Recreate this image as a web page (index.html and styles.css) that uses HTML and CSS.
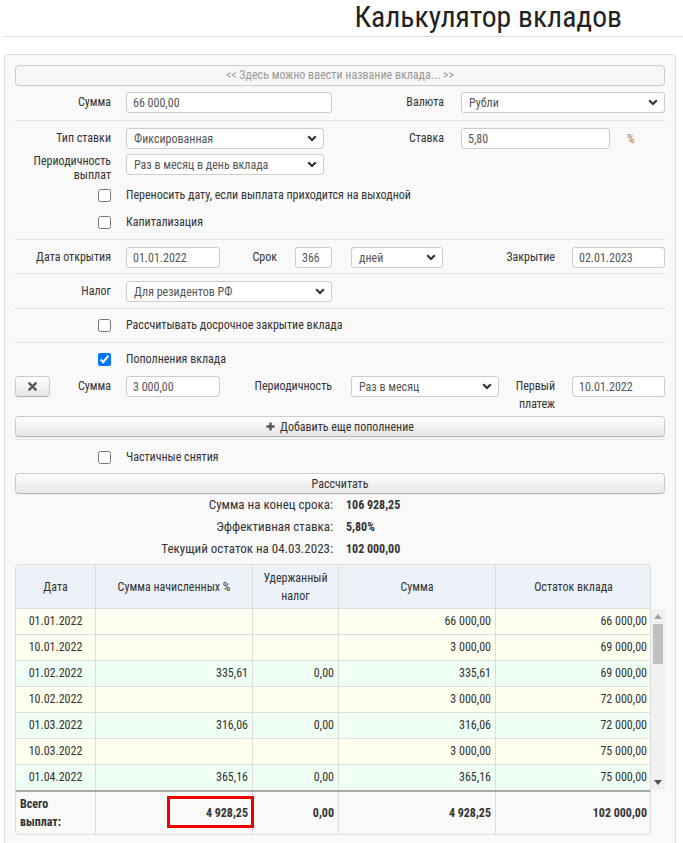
FILE: index.html
```html
<!DOCTYPE html>
<html lang="ru">
<head>
<meta charset="utf-8">
<title>Калькулятор вкладов</title>
<link rel="stylesheet" href="styles.css">
</head>
<body>
<header class="pagehead">
  <h1 class="title">Калькулятор вкладов</h1>
</header>

<main class="panel">
  <section class="sec s1">
    <div class="namebar">&lt;&lt; Здесь можно ввести название вклада... &gt;&gt;</div>
    <div class="row r1">
      <label class="lbl l1">Сумма</label>
      <input class="inp w206" type="text" value="66 000,00">
      <label class="lbl w112 mr17">Валюта</label>
      <div class="select w204"><span>Рубли</span><svg class="chev" viewBox="0 0 10 7" width="10" height="7"><path d="M1.2 1.2 L5 5 L8.8 1.2"/></svg></div>
    </div>
  </section>

  <section class="sec s2">
    <div class="row">
      <label class="lbl l1">Тип ставки</label>
      <div class="select w198"><span>Фиксированная</span><svg class="chev" viewBox="0 0 10 7" width="10" height="7"><path d="M1.2 1.2 L5 5 L8.8 1.2"/></svg></div>
      <label class="lbl w120 mr17">Ставка</label>
      <input class="inp w149" type="text" value="5,80">
      <span class="pct">%</span>
    </div>
    <div class="row r3">
      <label class="lbl l1 twoline">Периодичность выплат</label>
      <div class="select w198"><span>Раз в месяц в день вклада</span><svg class="chev" viewBox="0 0 10 7" width="10" height="7"><path d="M1.2 1.2 L5 5 L8.8 1.2"/></svg></div>
    </div>
    <div class="row cbrow cb1">
      <span class="cbcell"><input type="checkbox"></span>
      <span class="cbtext">Переносить дату, если выплата приходится на выходной</span>
    </div>
    <div class="row cbrow cb2">
      <span class="cbcell"><input type="checkbox"></span>
      <span class="cbtext">Капитализация</span>
    </div>
  </section>

  <section class="sec s3">
    <div class="row">
      <label class="lbl l1">Дата открытия</label>
      <input class="inp w94" type="text" value="01.01.2022">
      <label class="lbl w57 mr18">Срок</label>
      <input class="inp w37" type="text" value="366">
      <div class="select w92 ml19"><span>дней</span><svg class="chev" viewBox="0 0 10 7" width="10" height="7"><path d="M1.2 1.2 L5 5 L8.8 1.2"/></svg></div>
      <label class="lbl w112 mr17">Закрытие</label>
      <input class="inp w93" type="text" value="02.01.2023">
    </div>
  </section>

  <section class="sec s4">
    <div class="row">
      <label class="lbl l1">Налог</label>
      <div class="select w206"><span>Для резидентов РФ</span><svg class="chev" viewBox="0 0 10 7" width="10" height="7"><path d="M1.2 1.2 L5 5 L8.8 1.2"/></svg></div>
    </div>
  </section>

  <section class="sec s5">
    <div class="row cbrow">
      <span class="cbcell"><input type="checkbox"></span>
      <span class="cbtext">Рассчитывать досрочное закрытие вклада</span>
    </div>
  </section>

  <section class="sec s6">
    <div class="row cbrow">
      <span class="cbcell"><input type="checkbox" checked></span>
      <span class="cbtext">Пополнения вклада</span>
    </div>
    <div class="row rep">
      <button class="btn xbtn" type="button"><svg viewBox="0 0 10 10" width="9" height="9"><path d="M1.5 1.5 L8.5 8.5 M8.5 1.5 L1.5 8.5"/></svg></button>
      <label class="lbl w61 mr15 lt">Сумма</label>
      <input class="inp w94" type="text" value="3 000,00">
      <label class="lbl w112 mr19 lt">Периодичность</label>
      <div class="select w148"><span>Раз в месяц</span><svg class="chev" viewBox="0 0 10 7" width="10" height="7"><path d="M1.2 1.2 L5 5 L8.8 1.2"/></svg></div>
      <label class="lbl w56 mr17 lt">Первый платеж</label>
      <input class="inp w93" type="text" value="10.01.2022">
    </div>
    <button class="btn wide addbtn" type="button"><svg class="plus" viewBox="0 0 10 10" width="9" height="9"><path d="M5 0.5 V9.5 M0.5 5 H9.5"/></svg>Добавить еще пополнение</button>
  </section>

  <section class="s7">
    <div class="row cbrow">
      <span class="cbcell"><input type="checkbox"></span>
      <span class="cbtext">Частичные снятия</span>
    </div>
    <button class="btn wide calcbtn" type="button">Рассчитать</button>
  </section>

  <dl class="results">
    <dt>Сумма на конец срока:</dt><dd>106 928,25</dd>
    <dt>Эффективная ставка:</dt><dd>5,80%</dd>
    <dt>Текущий остаток на 04.03.2023:</dt><dd>102 000,00</dd>
  </dl>

  <div class="grid">
    <div class="thead trow">
      <div class="c">Дата</div>
      <div class="c">Сумма начисленных %</div>
      <div class="c">Удержанный<br>налог</div>
      <div class="c">Сумма</div>
      <div class="c">Остаток вклада</div>
    </div>
    <div class="tbodywrap">
      <div class="tbody">
        <div class="trow y"><div class="c d">01.01.2022</div><div class="c n"></div><div class="c n"></div><div class="c n">66 000,00</div><div class="c n">66 000,00</div></div>
        <div class="trow y"><div class="c d">10.01.2022</div><div class="c n"></div><div class="c n"></div><div class="c n">3 000,00</div><div class="c n">69 000,00</div></div>
        <div class="trow g"><div class="c d">01.02.2022</div><div class="c n">335,61</div><div class="c n">0,00</div><div class="c n">335,61</div><div class="c n">69 000,00</div></div>
        <div class="trow y"><div class="c d">10.02.2022</div><div class="c n"></div><div class="c n"></div><div class="c n">3 000,00</div><div class="c n">72 000,00</div></div>
        <div class="trow g"><div class="c d">01.03.2022</div><div class="c n">316,06</div><div class="c n">0,00</div><div class="c n">316,06</div><div class="c n">72 000,00</div></div>
        <div class="trow y"><div class="c d">10.03.2022</div><div class="c n"></div><div class="c n"></div><div class="c n">3 000,00</div><div class="c n">75 000,00</div></div>
        <div class="trow g"><div class="c d">01.04.2022</div><div class="c n">365,16</div><div class="c n">0,00</div><div class="c n">365,16</div><div class="c n">75 000,00</div></div>
      </div>
      <div class="scrollbar">
        <svg class="arr" viewBox="0 0 8 5" width="8" height="5"><path d="M0 5 L4 0 L8 5 Z" fill="#a3a3a3"/></svg>
        <div class="thumb"></div>
        <div class="track"></div>
        <svg class="arr" viewBox="0 0 8 5" width="8" height="5"><path d="M0 0 L4 5 L8 0 Z" fill="#505050"/></svg>
      </div>
    </div>
    <div class="tfoot trow">
      <div class="c f1">Всего<br>выплат:</div>
      <div class="c n mark">4 928,25<span class="redbox"></span></div>
      <div class="c n">0,00</div>
      <div class="c n">4 928,25</div>
      <div class="c n">102 000,00</div>
    </div>
  </div>
</main>
</body>
</html>
```
FILE: styles.css
```css
* { box-sizing: border-box; }

body {
  margin: 0;
  font-family: "Roboto", "Liberation Sans", sans-serif;
  font-stretch: 75%;
  font-size: 12px;
  color: #333;
  background: #fff;
}

.pagehead {
  margin-left: 3px;
  height: 37px;
  border-bottom: 1px solid #ddd;
  display: flex;
  justify-content: flex-end;
  padding-right: 61px;
}
.title {
  margin: 0;
  font-weight: normal;
  font-size: 29.6px;
  line-height: 34px;
  color: #222;
}

.panel {
  display: block;
  width: 672px;
  margin: 17px 0 0 4px;
  background: #f9f9f9;
  border: 1px solid #ddd;
  border-radius: 4px;
  padding: 10px 10px 20px;
}

.sec { border-bottom: 1px solid #e3e3e3; }

.namebar {
  height: 21px;
  border: 1px solid #ccc;
  border-radius: 4px;
  background: #f7f7f7;
  color: #999;
  text-align: center;
  line-height: 19px;
  font-size: 12px;
}

.row { display: flex; align-items: center; }
.r1 { margin-top: 6px; }
.s1 { padding-bottom: 7px; }
.s2 { padding-top: 7px; padding-bottom: 7px; }
.r3 { margin-top: 5px; align-items: flex-start; }
.cb1 { margin-top: 3px; }
.cb2 { margin-top: 7px; }
.s3 { padding-top: 7px; padding-bottom: 5px; }
.s4 { padding-top: 7px; padding-bottom: 6px; }
.s5 { padding-top: 6px; padding-bottom: 7px; }
.s6 { padding-top: 6px; padding-bottom: 2px; }
.s7 { padding-top: 7px; }

.lbl {
  text-align: right;
  flex: none;
  line-height: 21px;
}
.l1 { width: 96px; margin-right: 15px; }
.twoline { line-height: 14px; }

.w37 { width: 37px; }
.w56 { width: 56px; }
.w57 { width: 57px; }
.w61 { width: 61px; }
.w92 { width: 92px; }
.w93 { width: 93px; }
.w94 { width: 94px; }
.w112 { width: 112px; }
.w120 { width: 120px; }
.w148 { width: 148px; }
.w149 { width: 149px; }
.w198 { width: 198px; }
.w204 { width: 204px; }
.w206 { width: 206px; }
.mr15 { margin-right: 15px; }
.mr17 { margin-right: 17px; }
.mr18 { margin-right: 18px; }
.mr19 { margin-right: 19px; }
.ml19 { margin-left: 19px; }

.inp {
  flex: none;
  height: 21px;
  margin: 0;
  padding: 0 6px;
  border: 1px solid #ccc;
  border-radius: 3px;
  background: #fff;
  color: #555;
  font: inherit;
  font-stretch: 75%;
  font-size: 12px;
}

.select {
  flex: none;
  height: 21px;
  display: flex;
  align-items: center;
  justify-content: space-between;
  padding: 0 6px 0 7px;
  border: 1px solid #ccc;
  border-radius: 3px;
  background: #fff;
  color: #555;
}
.chev path {
  fill: none;
  stroke: #333;
  stroke-width: 2.2;
}

.pct { margin-left: 17px; color: #c9782e; }

.cbrow { height: 20px; }
.cbcell {
  width: 96px;
  margin-right: 15px;
  display: flex;
  justify-content: flex-end;
  flex: none;
}
.cbcell input {
  margin: 0;
  width: 13px;
  height: 13px;
}

.rep { margin-top: 7px; align-items: flex-start; height: 37px; }
.rep .lt { line-height: 18px; padding-top: 1px; }

.btn {
  font: inherit;
  font-stretch: 75%;
  font-size: 12px;
  color: #333;
  height: 21px;
  margin: 0;
  padding: 0;
  border: 1px solid #ccc;
  border-bottom-color: #b3b3b3;
  border-radius: 4px;
  background: linear-gradient(#ffffff, #e6e6e6);
  box-shadow: 0 1px 2px rgba(0,0,0,.05);
  display: flex;
  align-items: center;
  justify-content: center;
}
.xbtn { width: 35px; flex: none; }
.xbtn path { stroke: #555; stroke-width: 2.6; stroke-linecap: round; fill: none; }
.wide { width: 100%; }
.addbtn { margin-top: 3px; }
.plus { margin-right: 5px; }
.plus path { stroke: #555; stroke-width: 2.6; fill: none; }
.calcbtn { margin-top: 6px; }

.results {
  margin: 0;
  display: grid;
  grid-template-columns: 318px auto;
  column-gap: 13px;
  line-height: 22px;
}
.results dt { text-align: right; font-size: 13px; }
.results dd { margin: 0; font-weight: bold; }

.grid { margin-top: 4px; width: 650px; }
.trow {
  display: grid;
  grid-template-columns: 79px 157px 86px 157px 156px;
  width: 636px;
  border-left: 1px solid #ddd;
  border-right: 1px solid #ddd;
}
.c { border-left: 1px solid #ddd; padding: 0 4px; }
.c:first-child { border-left: none; }

.thead {
  height: 45px;
  background: #ecf2f7;
  border-top: 1px solid #ddd;
  border-bottom: 1px solid #ddd;
  border-radius: 4px 4px 0 0;
}
.thead .c {
  display: flex;
  align-items: center;
  justify-content: center;
  text-align: center;
  line-height: 18px;
}

.tbodywrap { display: flex; height: 181px; }
.tbody { width: 636px; }
.tbody .trow {
  height: 26px;
  border-bottom: 1px solid #ddd;
}
.tbody .trow:last-child { border-bottom: none; height: 25px; }
.y { background: #fffff0; }
.g { background: #effff3; }
.tbody .c { line-height: 25px; }
.d { text-align: center; }
.n { text-align: right; }

.scrollbar {
  width: 15px;
  background: #f1f1f1;
  display: flex;
  flex-direction: column;
  align-items: center;
}
.arr { flex: none; margin: 5px 0; }
.thumb { width: 10px; height: 40px; background: #c1c1c1; flex: none; }
.track { flex: 1; }

.tfoot {
  height: 45px;
  border-top: 2px solid #a9a9a9;
  border-bottom: 1px solid #ddd;
  border-radius: 0 0 4px 4px;
  font-weight: bold;
  background: #f9f9f9;
}
.tfoot .c { display: flex; align-items: center; justify-content: flex-end; line-height: 18px; }
.tfoot .f1 { justify-content: flex-start; text-align: left; padding-left: 4px; }
.mark { position: relative; }
.redbox {
  position: absolute;
  left: 71px;
  top: 4px;
  width: 87px;
  height: 32px;
  border: 3px solid #ee0000;
}
```
